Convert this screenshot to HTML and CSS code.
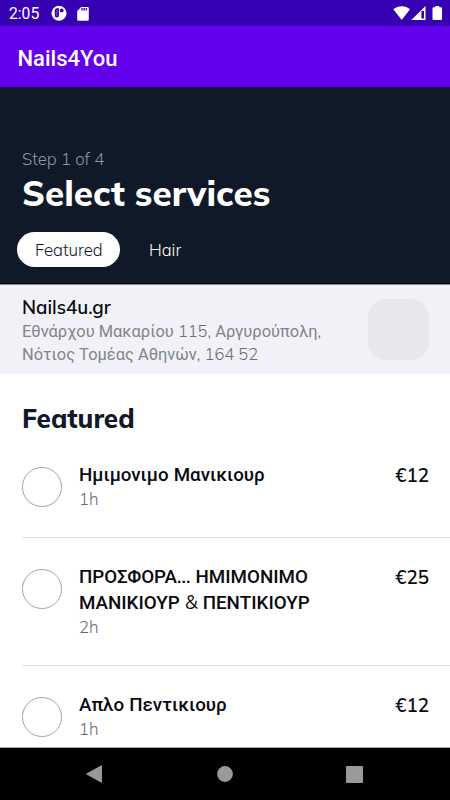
FILE: index.html
```html
<!DOCTYPE html>
<html lang="en">
<head>
<meta charset="utf-8">
<title>Nails4You</title>
<link rel="stylesheet" href="styles.css">
</head>
<body>
<div class="screen">
  <div class="status">
    <span class="time">2:05</span>
    <svg class="ic-app" width="16" height="16" viewBox="0 0 16 16"><circle cx="8" cy="8.300" r="7.500" fill="#fff"/><path d="M3.800 5.200A2 2 0 0 1 5.800 3.200H8V10.500A2.100 2.100 0 0 1 3.800 10.500Z" fill="#3700b3"/><path d="M5.400 5H6.600V11H5.400Z" fill="#fff" opacity=".3"/><circle cx="10.700" cy="5.400" r="1.900" fill="#3700b3"/></svg>
    <svg class="ic-sd" width="12" height="15" viewBox="0 0 12 15"><path d="M4.200.9H10.500A1.300 1.300 0 0 1 11.800 2.200V13.400A1.300 1.300 0 0 1 10.500 14.700H1.500A1.300 1.300 0 0 1 .2 13.400V4.900Z" fill="#fff"/><path d="M5 2V4.500M7.200 2V4.500M9.400 2V4.500" stroke="#3700b3" stroke-width="1.400"/></svg>
    <svg class="ic-right" width="52" height="16" viewBox="0 0 52 16"><path d="M.3 4.200C5 .100 12.500 .100 17 4.200L8.700 15Z" fill="#fff"/><path d="M32.500 1V15H18.300Z" fill="#fff"/><path d="M28.400 6H31V13.500H28.400Z" fill="#3700b3"/><path d="M42.300 1H46.300V2.200H48A1 1 0 0 1 49 3.200V14A1 1 0 0 1 48 15H40.500A1 1 0 0 1 39.500 14V3.200A1 1 0 0 1 40.500 2.200H42.300Z" fill="#fff"/></svg>
  </div>
  <header class="appbar">Nails4You</header>
  <section class="hero">
    <div class="step">Step 1 of 4</div>
    <h1>Select services</h1>
    <nav class="tabs"><a class="tab active">Featured</a><a class="tab">Hair</a></nav>
  </section>
  <section class="salon">
    <div class="info">
      <div class="name">Nails4u.gr</div>
      <div class="addr">Εθνάρχου Μακαρίου <span class="latin">115,</span> Αργυρούπολη<span class="latin">,</span><br>Νότιος Τομέας Αθηνών<span class="latin">, 164 52</span></div>
    </div>
    <div class="thumb"></div>
  </section>
  <main class="list">
    <h2>Featured</h2>
    <div class="item">
      <div class="radio"></div>
      <div class="body"><div class="title">Ημιμονιμο Μανικιουρ</div><div class="dur">1h</div></div>
      <div class="price">€12</div>
    </div>
    <div class="item">
      <div class="radio"></div>
      <div class="body"><div class="title">ΠΡΟΣΦΟΡΑ<span class="dots">...</span> ΗΜΙΜΟΝΙΜΟ<br>ΜΑΝΙΚΙΟΥΡ <span class="amp">&amp;</span> ΠΕΝΤΙΚΙΟΥΡ</div><div class="dur">2h</div></div>
      <div class="price">€25</div>
    </div>
    <div class="item">
      <div class="radio"></div>
      <div class="body"><div class="title">Απλο Πεντικιουρ</div><div class="dur">1h</div></div>
      <div class="price">€12</div>
    </div>
  </main>
  <footer class="navbar">
    <svg width="18" height="20" viewBox="0 0 18 20"><path d="M16 1.500Q17 1 17 2V18Q17 19 16 18.500L1.500 10.600Q.8 10 1.500 9.400Z" fill="#999"/></svg>
    <svg width="16" height="16" viewBox="0 0 16 16"><circle cx="8" cy="8" r="7.900" fill="#999"/></svg>
    <svg width="17" height="17" viewBox="0 0 17 17"><rect width="17" height="17" rx="1" fill="#999"/></svg>
  </footer>
</div>
</body>
</html>
```
FILE: styles.css
```css
* { box-sizing: border-box; }
body { margin: 0; background: #fff; font-family: Mulish, Muli, Roboto, sans-serif; }
.screen { width: 450px; height: 800px; display: flex; flex-direction: column; overflow: hidden; }
.status { height: 26px; flex: none; background: #3700b3; display: flex; align-items: center; padding: 0 5px 0 9px; color: #fff; }
.time { font: 15.700px/26px Roboto, sans-serif; width: 42px; padding-top: 2px; }
.ic-app { margin-right: 10px; }
.ic-right { margin-left: auto; }
.appbar { height: 62px; flex: none; background: #6200ee; color: #fff; font: 500 22px/65px Roboto, sans-serif; padding-left: 17.5px; border-bottom: 1px solid #2d0870; }
.hero { height: 196px; flex: none; background: #101927; padding: 59px 17px 0; border-bottom: 1px solid #000; }
.step { font-size: 16.700px; line-height: 23px; font-weight: 300; color: #93969b; padding-left: 5px; }
h1 { margin: 0; padding-left: 5px; font-size: 35px; line-height: 46px; font-weight: 800; color: #fff; white-space: nowrap; }
.tabs { display: flex; margin-top: 16px; gap: 11px; }
.tab { height: 35px; line-height: 36px; border-radius: 18px; padding: 0 18px; font-size: 16.7px; font-weight: 300; color: #fffaf2; }
.tab.active { width: 103px; background: #fff; color: #101927; }
.salon { height: 90px; flex: none; background: #f2f1f7; border-top: 1px solid #8c8b92; display: flex; justify-content: space-between; padding: 9px 21px 0 22px; }
.name { font-size: 18.700px; line-height: 26px; font-weight: 600; color: #080b10; }
.addr { font: 400 16.45px/23px Roboto, sans-serif; color: #80868d; white-space: nowrap; }
.latin { font-family: Mulish, Muli, Roboto, sans-serif; font-weight: 300; color: #666e77; line-height: 1; }
.thumb { width: 61.5px; height: 61.5px; margin-top: 4.6px; border-radius: 18px; background: #e8e7ec; }
.list { flex: 1; min-height: 0; overflow: hidden; padding-left: 22px; border-bottom: 1px solid #aaa; }
h2 { margin: 28px 0 19px; font-size: 26px; line-height: 34px; font-weight: 800; color: #101927; }
.item { display: flex; padding: 7px 21px 26px 0; border-bottom: 1px solid #e0e0e2; margin-bottom: 19px; }
.radio { width: 39.5px; height: 39.5px; border: 1px solid #a3a5aa; border-radius: 50%; margin: 5px 17.5px 0 0; flex: none; }
.body { flex: 1; white-space: nowrap; }
.title { font: 500 18.75px/26px Roboto, sans-serif; color: #080b10; word-spacing: .5px; }
.dots, .amp { font-family: Mulish, Muli, Roboto, sans-serif; line-height: 1; }
.dots { font-weight: 600; }
.amp { font-weight: 400; }
.dur { font-size: 16.5px; line-height: 23px; font-weight: 300; color: #5f6b7a; margin-top: -1px; margin-bottom: 1px; }
.price { font-size: 18.700px; line-height: 26px; font-weight: 600; color: #080b10; }
.navbar { height: 52px; flex: none; background: #000; display: flex; align-items: center; justify-content: space-between; padding: 0 87px 0 85px; }
```
